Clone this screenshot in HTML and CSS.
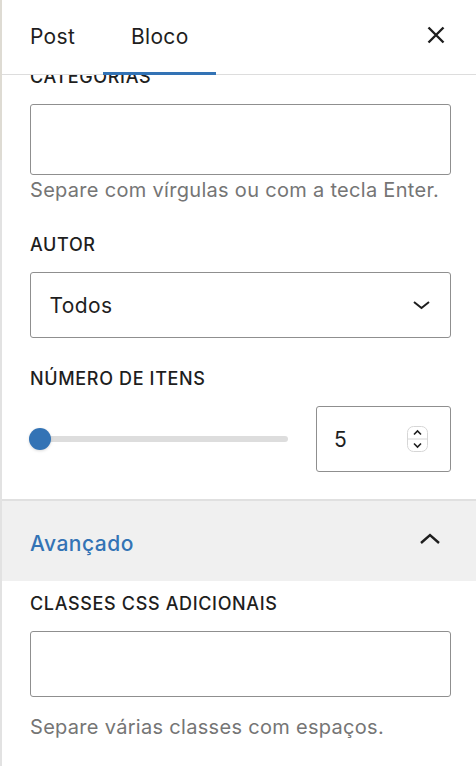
FILE: index.html
```html
<!DOCTYPE html>
<html lang="pt">
<head>
<meta charset="utf-8">
<link rel="stylesheet" href="styles.css">
</head>
<body>
<div class="frame">
  <div class="edge"></div>
  <aside class="sidebar">
    <header class="tabs">
      <button class="tab">Post</button>
      <button class="tab active">Bloco</button>
      <button class="close" aria-label="Fechar">
        <svg width="24" height="24" viewBox="0 0 24 24"><path d="M4.5 4.5 L19.5 19.5 M19.5 4.5 L4.5 19.5" stroke="#1e1e1e" stroke-width="2.4" fill="none"/></svg>
      </button>
    </header>
    <div class="scroll">
      <div class="content">
        <section class="panel">
          <div class="field">
            <label class="label">Categorias</label>
            <div class="input tall"></div>
            <p class="help first">Separe com vírgulas ou com a tecla Enter.</p>
          </div>
          <div class="field">
            <label class="label">Autor</label>
            <div class="input select">
              <span class="value">Todos</span>
              <svg class="chev" width="19" height="10" viewBox="0 0 19 10"><path d="M2 2 L9.5 8 L17 2" stroke="#1e1e1e" stroke-width="2" fill="none"/></svg>
            </div>
          </div>
          <div class="field last">
            <label class="label">Número de itens</label>
            <div class="range-row">
              <div class="range">
                <div class="track"></div>
                <div class="thumb"></div>
              </div>
              <div class="input number">
                <span class="value">5</span>
                <span class="spin">
                  <svg width="21" height="26" viewBox="0 0 21 26"><rect x="0.5" y="0.5" width="20" height="25" rx="6" fill="#fff" stroke="#d6d6d6"/><line x1="1" y1="13" x2="20" y2="13" stroke="#d6d6d6"/><path d="M7 8.5 L10.5 5 L14 8.5" stroke="#1e1e1e" stroke-width="1.6" fill="none"/><path d="M7 17.5 L10.5 21 L14 17.5" stroke="#1e1e1e" stroke-width="1.6" fill="none"/></svg>
                </span>
              </div>
            </div>
          </div>
        </section>
        <section class="panel advanced">
          <div class="panel-head">
            <span class="panel-title">Avançado</span>
            <svg class="chev-up" width="22" height="12" viewBox="0 0 22 12"><path d="M2 10 L11 2 L20 10" stroke="#1e1e1e" stroke-width="2.4" fill="none"/></svg>
          </div>
          <div class="panel-body">
            <label class="label">Classes CSS adicionais</label>
            <div class="input"></div>
            <p class="help">Separe várias classes com espaços.</p>
          </div>
        </section>
      </div>
    </div>
  </aside>
</div>
</body>
</html>
```

FILE: styles.css
```css
* { box-sizing: border-box; }
html, body { margin: 0; padding: 0; background: #fff; }
body {
  width: 476px;
  height: 766px;
  overflow: hidden;
  font-family: Inter, "Noto Sans", sans-serif;
  color: #1e1e1e;
}
.frame { display: flex; height: 766px; }
.edge {
  width: 2px;
  flex: none;
  background: linear-gradient(#dedbd3 0, #dedbd3 160px, #e2e2e2 160px);
}
.sidebar { flex: 1; display: flex; flex-direction: column; min-width: 0; }
.tabs {
  height: 75px;
  flex: none;
  display: flex;
  align-items: stretch;
  border-bottom: 1px solid #dddddd;
  position: relative;
  z-index: 2;
  background: #fff;
}
.tab {
  border: 0;
  background: none;
  font: 400 21px Inter, sans-serif;
  letter-spacing: 0.3px;
  color: #1e1e1e;
  padding: 0 28px 2px;
  margin: 0 0 -1px;
  position: relative;
}
.tab.active { padding: 0 27px 2px 28px; }
.tab.active::after {
  content: "";
  position: absolute;
  left: 0; right: 0; bottom: 0;
  height: 3px;
  background: #3373b5;
}
.close {
  margin-left: auto;
  margin-right: 28px;
  border: 0;
  background: none;
  padding: 0 0 4px;
  width: 24px;
  display: flex;
  align-items: center;
  justify-content: center;
}
.scroll { flex: 1; overflow: hidden; }
.content { margin-top: -10.5px; }
.panel { padding: 0 25px 27px 28px; border-bottom: 2px solid #e0e0e0; }
.field { margin-bottom: 29px; }
.field.last { margin-bottom: 0; }
.label {
  display: block;
  font-size: 18px;
  font-weight: 500;
  text-transform: uppercase;
  letter-spacing: 0.65px;
  line-height: 24px;
  margin-bottom: 15px;
}
.input {
  height: 66px;
  border: 1.5px solid #8f8f8f;
  border-radius: 3px;
  background: #fff;
}
.input.tall { height: 71px; }
.help {
  margin: 16.5px 0 0;
  font-size: 20px;
  letter-spacing: 0.3px;
  line-height: 28px;
  color: #757575;
}
.help.first { margin-top: 1.5px; }
.select {
  display: flex;
  align-items: center;
  justify-content: space-between;
  padding: 0 19px 0 18.5px;
}
.value { font-size: 21px; letter-spacing: 0.4px; }
.range-row { display: flex; align-items: center; gap: 28px; }
.range { flex: 1; position: relative; height: 30px; }
.track {
  position: absolute;
  left: 0; right: 0; top: 12px;
  height: 6px;
  border-radius: 3px;
  background: #dddddd;
}
.thumb {
  position: absolute;
  left: -1px; top: 4px;
  width: 22px; height: 22px;
  border-radius: 50%;
  background: #3373b5;
  box-shadow: 0 1px 3px rgba(0,0,0,0.15);
}
.number {
  width: 135px;
  flex: none;
  display: flex;
  align-items: center;
  justify-content: space-between;
  padding: 0 22px 0 17px;
}
.spin { display: flex; }
.advanced { padding: 0; border-bottom: 0; }
.panel-head {
  height: 80px;
  background: #f0f0f0;
  display: flex;
  align-items: center;
  justify-content: space-between;
  padding: 4px 35px 0 28px;
}
.chev-up { margin-bottom: 8px; }
.panel-title { font-size: 21px; font-weight: 500; letter-spacing: 0.5px; color: #3373b5; }
.panel-body { padding: 10.5px 25px 0 28px; }
```
